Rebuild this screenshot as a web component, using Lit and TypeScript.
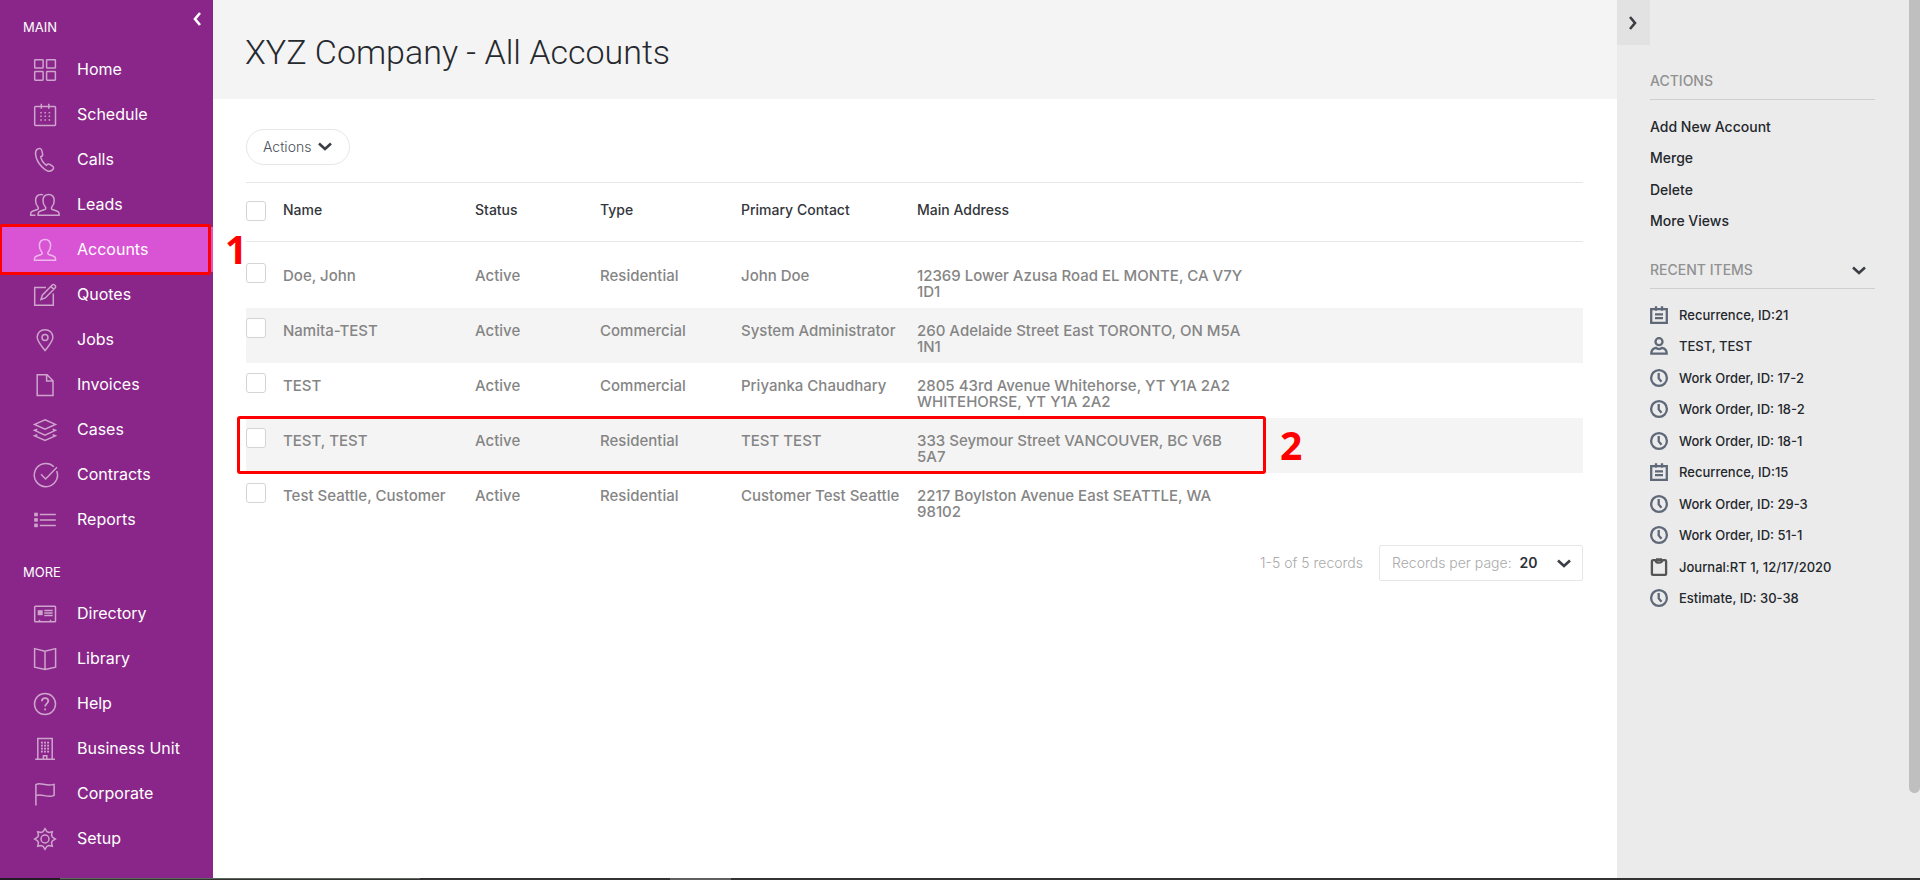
import { LitElement, html, css, svg } from "lit";
import { customElement, property, state } from "lit/decorators.js";
import { classMap } from "lit/directives/class-map.js";

const person = "M1.5 22.3h21v-1.8c0-1.5-1-2-2.4-2.5l-4.3-1.5c-1.3-.5-1.2-1.8-.4-2.8 1.6-1.8 2.2-3.5 2.2-5.9C17.6 3.8 15.4 1.5 12 1.5S6.4 3.8 6.4 7.8c0 2.4.6 4.1 2.2 5.9.8 1 .9 2.3-.4 2.8l-4.3 1.5c-1.4.5-2.4 1-2.4 2.5z";

const dots = (xs: number[], ys: number[], size: number) =>
  ys.map((y) => xs.map((x) => svg`<rect class="solid" x=${x - size / 2} y=${y - size / 2} width=${size} height=${size} />`));

const navIcons: Record<string, unknown> = {
  home: svg`<rect x="1.7" y="1.7" width="8.4" height="8.4" rx=".6"/><rect x="13.6" y="1.7" width="8.8" height="8.4" rx=".6"/><rect x="1.7" y="13.4" width="8.4" height="8.8" rx=".6"/><rect x="13.6" y="13.4" width="8.8" height="8.8" rx=".6"/>`,
  schedule: svg`<rect x="1.7" y="3.6" width="20.8" height="18.8" rx=".8"/><path d="M8.3 .8v5M15.8 .8v5"/>${dots([8, 12.2, 16.4], [9.7, 13.3, 17], 1.5)}`,
  calls: svg`<path d="M4.4 1.1C6.9-.3 8.4.7 8.9 2.8l.7 3c.4 1.6-.5 2.5-1.9 2.9.6 3.2 3 6.8 5.7 8.6 1-1.1 2-1.6 3.3-.9l2.7 1.6c1.5 1 1.5 2.4.3 3.6-3.1 3.1-7 1.4-10-2C5.6 15.7 3.1 10.8 2.6 6.6 2.3 4.1 2.9 2.1 4.4 1.1z"/>`,
  leads: svg`<path transform="translate(3.6 0)" d=${person}/><path d="M10 1.9C9.200 1.600 8.900 1.500 8.200 1.500 4.800 1.500 2.600 3.800 2.600 7.800c0 2.400.6 4.100 2.200 5.900.8 1 .9 2.300-.4 2.800L.1 18c-1.400.5-2.400 1-2.400 2.500v1.800h4.800"/>`,
  accounts: svg`<path d=${person}/>`,
  quotes: svg`<path d="M13 4.400H1.700v17.800h18.600V10.500M8 16.500l1.300-4.400L19 2.300c1.900-1.900 4.700.8 3 2.700l-9.700 9.900zM18 3.600l2.800 2.800"/>`,
  jobs: svg`<path d="M12 22.600C9.500 19.300 4.200 13.400 4.200 9.300 4.200 4.600 7.600 1.700 12 1.700s7.900 2.900 7.900 7.600c0 4.100-5.300 10-7.900 13.300z"/><circle cx="12" cy="9.400" r="3"/>`,
  invoices: svg`<path d="M4.200 1.700h9.800l6 6v14.800H4.200zM13.600 1.700v6.300h6.200"/>`,
  cases: svg`<path d="M12 1.700l10.400 4.700L12 11.100 1.600 6.400zM4.300 11.300l-2.700 1.100L12 17.100l10.400-4.700-2.700-1.100M4.300 16.800l-2.700 1.100L12 22.500l10.400-4.600-2.700-1.100"/>`,
  contracts: svg`<path d="M20.900 3.700a11.600 11.600 0 1 0 2.800 4.200M8 11.200l4.600 4.800L24 4.300"/>`,
  reports: svg`${dots([3], [6.5, 11.9, 17.400], 3.600)}<path d="M6.800 6.500h16M6.800 11.900h16M6.800 17.400h16"/>`,
  directory: svg`<rect x="1.700" y="4.200" width="20.800" height="15.600" rx=".8"/><rect class="solid" x="4.700" y="8.200" width="5" height="5"/><path d="M11.300 8.600h8.400M11.300 11h8.400M11.300 13.400h8.400M6.500 19.800v-2M17.500 19.800v-2"/>`,
  library: svg`<path d="M12 4.300L1.600 1.600v18.600L12 22.600l10.600-2.400V1.600zM12 4.300v18.300"/>`,
  help: svg`<circle cx="12" cy="12" r="10.500"/><path class="bold" d="M8.900 9.300c0-4.200 6.400-4 6.400-.2 0 2.400-3.200 2.600-3.200 5.400M12.100 16.600v1.700"/>`,
  business: svg`<path d="M4.800 22.200V1.600h14.400v20.600M2.200 22.300h19.800M10.400 22v-3.300h3.400V22"/>${dots([8.9, 12, 15.100], [5.600, 8.600, 11.600, 14.600], 1.900)}`,
  corporate: svg`<path d="M2.900 23.500V2.600c5-2.900 9.800 2.400 18.200-.2v11c-7 3.400-12-2.600-18.200.2"/>`,
  setup: svg`<circle cx="12" cy="12" r="4"/><path d="M12 1.600l1.900 3.100 2 .8 3.400-.8-.8 3.400.8 2 3.100 1.900-3.100 1.900-.8 2 .8 3.400-3.400-.8-2 .8-1.900 3.100-1.900-3.100-2-.8-3.400.8.8-3.400-.8-2L1.600 12l3.100-1.900.8-2-.8-3.400 3.400.8 2-.8z"/>`,
};

const recentIcons: Record<string, unknown> = {
  recurrence: svg`<path d="M1.200 3.200h15.600v13.600H1.200zM6 .3v4.400M12 .3v4.400M5 8.300h8M5 12.200h8"/>`,
  contact: svg`<circle cx="9" cy="4.700" r="3.500"/><path d="M1.300 16.600c0-3.200 2.200-5.200 4.700-5.700 1.500 1.500 4.500 1.500 6 0 2.500.5 4.700 2.500 4.700 5.700z"/>`,
  work: svg`<circle cx="9" cy="9" r="7.900"/><path d="M8.700 4v5.400l2.800 3.300"/>`,
  journal: svg`<rect x="1.900" y="2.200" width="14.200" height="14.700" rx="1"/><path d="M5.600 2.200c0 3.300 6.800 3.300 6.800 0M6 1.500h6"/>`,
};

const chevron = (d: string, w: number, h: number) =>
  html`<svg class="chevron" width=${w} height=${h} viewBox="0 0 ${w} ${h}" aria-hidden="true"><path d=${d} /></svg>`;
const down = () => chevron("M1 1.500L7 7L13 1.500", 14, 8);

const mainMenu = [
  ["home", "Home"], ["schedule", "Schedule"], ["calls", "Calls"], ["leads", "Leads"],
  ["accounts", "Accounts"], ["quotes", "Quotes"], ["jobs", "Jobs"], ["invoices", "Invoices"],
  ["cases", "Cases"], ["contracts", "Contracts"], ["reports", "Reports"],
];
const moreMenu = [
  ["directory", "Directory"], ["library", "Library"], ["help", "Help"],
  ["business", "Business Unit"], ["corporate", "Corporate"], ["setup", "Setup"],
];

interface Account {
  name: string;
  status: string;
  type: string;
  contact: string;
  address: string;
  marked?: boolean;
}

const accounts: Account[] = [
  { name: "Doe, John", status: "Active", type: "Residential", contact: "John Doe", address: "12369 Lower Azusa Road EL MONTE, CA V7Y 1D1" },
  { name: "Namita-TEST", status: "Active", type: "Commercial", contact: "System Administrator", address: "260 Adelaide Street East TORONTO, ON M5A 1N1" },
  { name: "TEST", status: "Active", type: "Commercial", contact: "Priyanka Chaudhary", address: "2805 43rd Avenue Whitehorse, YT Y1A 2A2 WHITEHORSE, YT Y1A 2A2" },
  { name: "TEST, TEST", status: "Active", type: "Residential", contact: "TEST TEST", address: "333 Seymour Street VANCOUVER, BC V6B 5A7", marked: true },
  { name: "Test Seattle, Customer", status: "Active", type: "Residential", contact: "Customer Test Seattle", address: "2217 Boylston Avenue East SEATTLE, WA 98102" },
];

const recents = [
  ["recurrence", "Recurrence, ID:21"], ["contact", "TEST, TEST"], ["work", "Work Order, ID: 17-2"],
  ["work", "Work Order, ID: 18-2"], ["work", "Work Order, ID: 18-1"], ["recurrence", "Recurrence, ID:15"],
  ["work", "Work Order, ID: 29-3"], ["work", "Work Order, ID: 51-1"], ["journal", "Journal:RT 1, 12/17/2020"],
  ["work", "Estimate, ID: 30-38"],
];

const shared = css`
  * { box-sizing: border-box; }
  a { color: inherit; text-decoration: none; }
  button { font: inherit; color: inherit; background: none; border: 0; padding: 0; cursor: pointer; }
  ul { list-style: none; margin: 0; padding: 0; }
  svg { display: block; fill: none; overflow: visible; }
  .chevron path { stroke: currentColor; stroke-width: 2.6; }
  .callout {
    position: absolute;
    border: 3px solid #f00;
    border-radius: 3px;
    pointer-events: none;
  }
  .step {
    position: absolute;
    color: #f00;
    font: bold 39px/40px "Noto Sans", sans-serif;
    pointer-events: none;
  }
`;

@customElement("side-nav")
export class SideNav extends LitElement {
  @state() private current = "accounts";

  static styles = [shared, css`
    :host { display: block; position: relative; background: #8a2689; color: #fff; font-size: 16px; line-height: 20px; }
    .collapse { position: absolute; top: 12px; right: 12px; }
    .heading { margin: 0; font-size: 13px; font-weight: 400; line-height: 16px; }
    .first { padding: 19px 0 12px 23px; }
    .second { padding: 22px 0 11px 23px; }
    .item { position: relative; display: flex; align-items: center; gap: 20px; height: 45px; padding-left: 33px; }
    .item svg { width: 24px; height: 24px; stroke: #fff; stroke-width: 1.5; opacity: .58; }
    .item .solid { fill: #fff; stroke: none; }
    .item .bold { stroke-width: 1.8; }
    .label { padding-bottom: 1px; }
    .active { background: #d954d4; }
    .callout { inset: -3px 2px -3px -1px; }
    .step { left: 225px; top: 2px; }
  `];

  private list(items: string[][]) {
    return html`<ul>${items.map(([id, label]) => html`
      <li><a href="#${id}" class=${classMap({ item: true, active: id === this.current })}>
        <svg viewBox="0 0 24 24" aria-hidden="true">${navIcons[id]}</svg>
        <span class="label">${label}</span>
        ${id === "accounts" ? html`<span class="callout"></span><span class="step">1</span>` : null}
      </a></li>`)}</ul>`;
  }

  render() {
    return html`
      <button class="collapse" aria-label="Collapse menu">${chevron("M7 1L2 7L7 13", 8, 14)}</button>
      <nav>
        <h2 class="heading first">MAIN</h2>
        ${this.list(mainMenu)}
        <h2 class="heading second">MORE</h2>
        ${this.list(moreMenu)}
      </nav>`;
  }
}

@customElement("accounts-page")
export class AccountsPage extends LitElement {
  @property({ attribute: false }) rows: Account[] = accounts;

  static styles = [shared, css`
    :host { display: block; background: #fff; color: #3b3f45; }
    header { height: 99px; padding: 30px 32px 0; background: #f4f4f4; }
    h1 { margin: 0; color: #26292e; font-family: Roboto, "Liberation Sans", sans-serif; font-size: 34px; font-weight: 300; line-height: 44px; }
    .content { padding: 30px 34px 0 33px; }
    .menu { display: flex; align-items: center; gap: 7px; height: 36px; padding: 0 17px 2px 16px; border: 1px solid #e6e6e6; border-radius: 18px; color: #4a5059; font-size: 14px; font-weight: 300; }
    .menu .chevron { color: #3b3f45; }
    table { width: 100%; margin-top: 17px; table-layout: fixed; border-collapse: separate; border-spacing: 0; }
    .c-check { width: 37px; }
    .c-name { width: 192px; }
    .c-status { width: 125px; }
    .c-type { width: 141px; }
    .c-contact { width: 176px; }
    th, td { padding: 0; text-align: left; vertical-align: top; line-height: 16px; }
    th { height: 60px; padding-top: 19px; border: solid #e6e6e6; border-width: 1px 0; color: #33363b; font-size: 14px; font-weight: 500; }
    th.check { padding-top: 18px; }
    tbody::before { content: ""; display: block; height: 11px; }
    td { height: 55px; padding-top: 15px; color: #858585; font-size: 15px; font-weight: 500; }
    td.check { position: relative; padding-top: 10px; }
    tbody tr:nth-child(even) td { background: #f4f4f4; }
    .address { max-width: 330px; }
    input { appearance: none; display: block; width: 20px; height: 20px; margin: 0; border: 1px solid #d4d4d4; border-radius: 3px; background: #fff; }
    .callout { left: -9px; top: -2px; width: 1029px; height: 58px; z-index: 1; }
    .step { left: 1034px; top: 7px; z-index: 1; }
    .pager { display: flex; justify-content: flex-end; align-items: center; gap: 16px; margin-top: 17px; color: #aaa; font-size: 14px; font-weight: 300; line-height: 18px; }
    .size { position: relative; display: flex; align-items: center; height: 36px; width: 204px; padding-left: 12px; border: 1px solid #e6e6e6; border-radius: 2px; }
    select { appearance: none; flex: 1; height: 34px; padding: 0 0 0 8px; border: 0; background: none; color: #2c3036; font: inherit; font-weight: 600; }
    .size .chevron { position: absolute; right: 11px; top: 13px; color: #3b3f45; pointer-events: none; }
  `];

  render() {
    return html`
      <header><h1>XYZ Company - All Accounts</h1></header>
      <div class="content">
        <button class="menu">Actions ${down()}</button>
        <table>
          <colgroup><col class="c-check"><col class="c-name"><col class="c-status"><col class="c-type"><col class="c-contact"><col></colgroup>
          <thead><tr>
            <th class="check"><input type="checkbox" aria-label="Select all"></th>
            <th>Name</th><th>Status</th><th>Type</th><th>Primary Contact</th><th>Main Address</th>
          </tr></thead>
          <tbody>${this.rows.map((r) => html`<tr>
            <td class="check"><input type="checkbox" aria-label="Select ${r.name}">
              ${r.marked ? html`<div class="callout"></div><div class="step">2</div>` : null}</td>
            <td>${r.name}</td><td>${r.status}</td><td>${r.type}</td><td>${r.contact}</td>
            <td><div class="address">${r.address}</div></td>
          </tr>`)}</tbody>
        </table>
        <div class="pager">
          <span>1-5 of 5 records</span>
          <div class="size">
            <label for="size">Records per page:</label>
            <select id="size"><option>20</option><option>50</option><option>100</option></select>
            ${down()}
          </div>
        </div>
      </div>`;
  }
}

@customElement("action-panel")
export class ActionPanel extends LitElement {
  static styles = [shared, css`
    :host { display: block; position: relative; background: #ebebeb; color: #24272c; font-size: 14px; line-height: 18px; }
    .toggle { display: grid; place-items: center; width: 33px; height: 45px; padding-right: 2px; background: #e2e2e2; color: #3b3f45; }
    section { margin: 0 45px 0 33px; }
    .actions { padding-top: 27px; }
    .recent { padding-top: 24px; }
    .title { display: flex; align-items: center; justify-content: space-between; padding-bottom: 9px; border-bottom: 1px solid #cfcfcf; color: #919191; }
    h2 { margin: 0; font-size: 14px; font-weight: 500; line-height: 18px; }
    .title button { padding-right: 9px; color: #3b3f45; }
    ul { padding-top: 11px; }
    .recent ul { padding-top: 10px; font-size: 13px; }
    li { height: 31px; }
    li:nth-child(even) { height: 32px; }
    li a { display: flex; align-items: center; gap: 11px; height: 31px; font-weight: 500; }
    li svg { width: 18px; height: 18px; stroke: #5f6878; stroke-width: 2.300; }
    li .journal { stroke: #555; }
    .thumb { position: absolute; top: 0; right: 0; width: 11px; height: calc(90% + 3px); border-radius: 0 0 6px 6px; background: #bfbfbf; }
  `];

  render() {
    return html`
      <button class="toggle" aria-label="Collapse panel">${chevron("M1 1L6 7L1 13", 8, 14)}</button>
      <section class="actions">
        <div class="title"><h2>ACTIONS</h2></div>
        <ul>${["Add New Account", "Merge", "Delete", "More Views"].map((t) => html`<li><a href="#">${t}</a></li>`)}</ul>
      </section>
      <section class="recent">
        <div class="title"><h2>RECENT ITEMS</h2><button aria-label="Toggle recent items">${down()}</button></div>
        <ul>${recents.map(([icon, t]) => html`<li><a href="#">
          <svg class=${icon} viewBox="0 0 18 18" aria-hidden="true">${recentIcons[icon]}</svg>${t}</a></li>`)}</ul>
      </section>
      <div class="thumb"></div>`;
  }
}

@customElement("app-root")
export class AppRoot extends LitElement {
  static styles = css`
    :host { display: flex; flex-direction: column; min-height: 100vh; font-family: Inter, "Open Sans", sans-serif; }
    .shell { flex: 1; display: grid; grid-template-columns: 213px minmax(0, 1fr) 303px; }
    side-nav { z-index: 1; }
    .edge { display: flex; height: 2px; background: #333; }
    .start { width: 60px; background: #241a26; }
    .search { width: 360px; border-top: 1px solid #5c6a5c; }
    .running { width: 61px; margin-left: 250px; background: #606060; }
  `;

  render() {
    return html`
      <div class="shell">
        <side-nav></side-nav>
        <accounts-page></accounts-page>
        <action-panel></action-panel>
      </div>
      <div class="edge"><div class="start"></div><div class="search"></div><div class="running"></div></div>`;
  }
}
